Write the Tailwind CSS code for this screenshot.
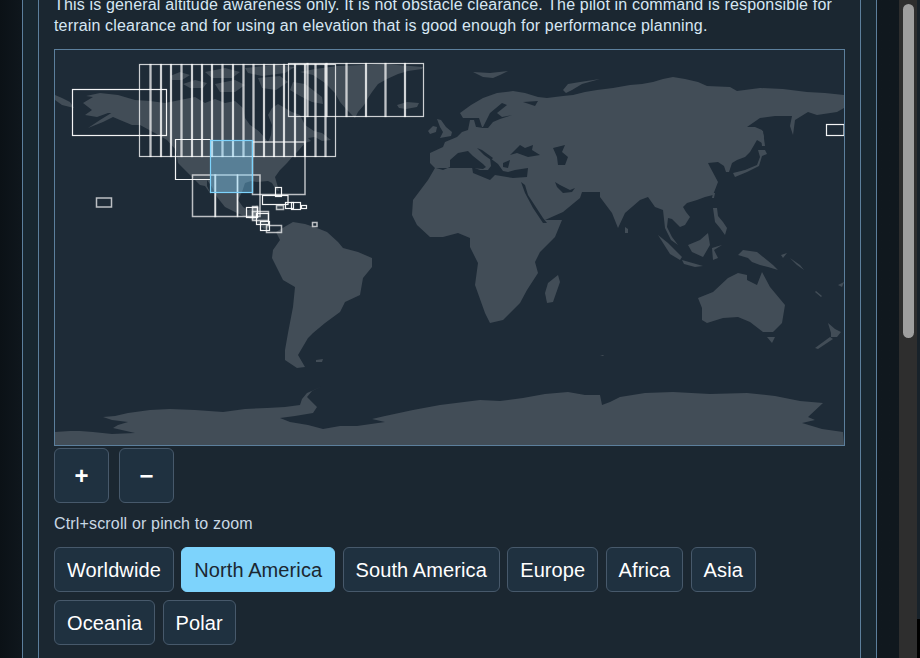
<!DOCTYPE html>
<html lang="en">
<head>
<meta charset="utf-8">
<title>Map</title>
<script src="https://cdn.jsdelivr.net/npm/@tailwindcss/browser@4"></script>
</head>
<body class="bg-[#10181e]">
<div class="flex h-[658px] w-[920px] overflow-hidden font-['Liberation_Sans',Arial,sans-serif]">
  <main class="flex-1 min-w-0 pl-[22px] pr-[22px] bg-gradient-to-r from-[#0b1116] from-0% to-[#10181e] to-[3%]">
    <div class="h-full border-x border-[#5c7f9c] bg-[#182730] px-[15px]">
      <section class="h-full border-x border-[#5c7f9c] bg-[#1b2731] px-[15px] overflow-hidden">
        <p class="-mt-[6px] text-base leading-[21px] tracking-[0.165px] text-[#d6e6f3] w-[791px]">This is general altitude awareness only. It is not obstacle clearance. The pilot in command is responsible for terrain clearance and for using an elevation that is good enough for performance planning.</p>
        <div class="mt-[13px] h-[397px] w-[791px] border border-[#5c7f9c] bg-[#1e2b37] overflow-hidden">
          <svg class="block h-[395px] w-[789px]" viewBox="55 50 789 395" xmlns="http://www.w3.org/2000/svg">
            <g class="fill-[#424d57]">
              <path d="M55 95L62 98L70 102L74 108L62 105L55 100Z"/>
              <path d="M86 96L100 93L118 95L135 100L150 101L165 103L180 100L195 97L205 103L215 99L225 103L235 101L243 108L245 118L250 125L258 130L264 137L268 142L271 135L272 125L268 115L272 108L278 104L285 108L292 112L300 115L305 125L314 131L322 133L331 140L322 141L315 137L308 138L311 141L305 143L299 150L293 156L287 163L280 170L275 177L277 184L279 191L276 190L272 183L268 181L257 182L251 181L245 183L242 192L238 200L243 207L248 210L253 208L257 205L260 208L258 215L253 217L257 220L262 221L267 223L270 228L264 229L257 222L248 218L237 213L225 207L217 197L212 187L207 180L207 186L212 196L205 186L200 185L190 175L178 163L176 150L167 140L153 132L140 125L132 125L120 120L113 117L103 122L88 128L100 120L113 112L117 113L108 113L97 117L85 115L92 110L83 103L93 97Z"/>
              <path d="M183 84L195 80L207 83L203 88L190 88Z"/>
              <path d="M170 76L180 72L190 75L182 80L172 80Z"/>
              <path d="M205 72L225 68L240 72L232 78L212 78Z"/>
              <path d="M215 84L235 80L245 85L235 92L220 92Z"/>
              <path d="M245 68L275 65L295 67L285 73L262 76L248 73Z"/>
              <path d="M258 78L280 76L288 82L276 90L262 88Z"/>
              <path d="M293 82L305 84L322 97L323 104L312 102L300 96L290 90Z"/>
              <path d="M300 72L315 69L337 66L362 65L385 64L423 67L422 69L408 71L398 74L387 79L378 84L372 92L368 98L364 105L358 112L355 118L350 113L346 109L340 102L335 93L325 83L313 75Z"/>
              <path d="M397 105L407 102L419 103L417 107L406 109L399 108Z"/>
              <path d="M473 72L490 73L508 71L500 75L493 78L483 77Z"/>
              <path d="M437 119L441 120L446 127L452 132L451 136L440 138L443 132L440 127Z"/>
              <path d="M428 131L433 126L437 127L436 132L430 134Z"/>
              <path d="M563 90L568 84L580 82L600 79L582 84L572 90L566 93Z"/>
              <path d="M460 113L471 105L483 98L497 93L513 91L525 93L538 97L547 98L563 96L573 95L585 92L597 90L613 88L630 85L642 84L653 82L663 79L673 77L685 79L698 82L707 86L730 87L737 91L760 88L783 89L807 92L825 93L844 95L844 108L837 112L817 115L808 112L795 120L793 135L790 126L792 116L775 116L760 118L747 127L755 127L762 130L764 137L762 143L757 140L750 152L745 157L737 160L732 163L729 172L726 172L724 166L718 162L708 163L710 167L718 182L713 195L705 197L697 200L687 203L683 207L686 212L690 217L685 225L680 227L672 219L668 218L667 227L672 237L678 245L671 240L665 228L663 210L655 207L648 197L640 200L625 213L618 228L612 213L600 197L600 192L582 192L580 198L563 212L545 220L562 220L555 237L540 252L535 262L538 273L527 290L520 303L503 320L490 323L485 313L475 285L478 263L470 247L470 238L458 233L443 237L430 237L417 225L412 215L413 200L428 180L435 168L430 163L430 153L443 147L445 142L457 137L462 132L468 130L470 120L474 120L476 127L482 127L479 118L468 118L463 118Z"/>
              <path d="M558 275L560 282L553 302L547 303L545 293L548 283Z"/>
              <path d="M625 227L628 229L628 233L625 233Z"/>
              <path d="M760 130L763 131L765 146L762 146Z"/>
              <path d="M733 173L745 170L757 165L760 157L758 150L765 150L767 154L762 156L759 166L747 172L735 177Z"/>
              <path d="M713 193L715 193L714 198L712 198Z"/>
              <path d="M713 208L717 208L718 216L723 222L727 228L725 235L720 228L715 222Z"/>
              <path d="M688 245L700 240L708 233L710 245L703 257L692 252Z"/>
              <path d="M658 235L668 243L682 257L680 260L670 254Z"/>
              <path d="M682 260L703 266L695 267L684 264Z"/>
              <path d="M712 248L722 245L714 250L718 258L713 260Z"/>
              <path d="M743 250L757 252L773 265L778 270L768 267L760 265L752 262L748 258L738 255Z"/>
              <path d="M698 298L713 292L728 278L738 273L747 275L747 280L757 285L762 272L770 287L785 305L782 323L773 332L763 332L750 322L738 317L723 318L707 323L702 320L702 308Z"/>
              <path d="M767 337L775 337L772 343Z"/>
              <path d="M828 323L835 329L841 332L837 337L831 337L831 333Z"/>
              <path d="M830 337L833 339L818 349L815 348Z"/>
              <path d="M280 240L276 232L286 226L293 222L305 224L317 228L327 232L338 242L343 248L358 252L372 258L372 267L363 278L360 295L345 302L340 312L325 323L313 333L308 338L298 355L305 367L297 368L285 360L285 350L288 333L293 307L295 287L283 280L272 258L273 250Z"/>
              <path d="M316 360L323 359L322 362L316 362Z"/>
              <path d="M55 445L55 432L70 431L80 431L93 432L112 434L135 433L113 428L118 425L128 422L112 420L103 417L115 416L128 413L150 410L170 409L195 410L223 412L245 409L267 408L285 407L300 405L302 399L307 393L323 386L312 391L307 397L317 407L313 413L295 416L280 418L290 422L308 425L323 429L340 426L357 426L385 422L372 419L385 416L413 410L440 405L480 400L500 401L523 398L545 394L568 392L585 395L600 395L602 405L610 402L620 397L645 393L673 392L710 394L747 393L775 396L800 401L823 403L808 417L815 420L802 423L822 429L843 432L844 445Z"/>
              <path d="M781 255L787 253L783 258Z M790 258L800 265L804 270L797 265Z M815 282L818 285L816 283Z M816 291L822 296L821 297L815 292Z M838 285L844 282L842 287Z M600 355L604 355L603 356Z"/>
            </g>
            <g class="fill-[#1e2b37]">
              <path d="M477 128L483 127L490 113L502 103L507 105L497 113L502 117L512 115L500 119L493 122L488 128Z"/>
              <path d="M523 102L538 101L535 106Z"/>
              <path d="M436 168L443 170L450 167L450 160L458 153L468 151L473 156L483 164L486 167L483 169L472 168L455 168Z"/>
              <path d="M472 167L473 173L490 180L495 175L513 178L527 177L528 168L515 170L508 172L503 171L498 164L490 158L491 166L488 170L480 170Z"/>
              <path d="M477 148L482 150L493 158L491 160L484 155Z"/>
              <path d="M503 163L510 160L508 168L503 167Z"/>
              <path d="M510 155L520 145L525 148L533 145L532 150L540 155L528 157L517 153Z"/>
              <path d="M553 148L565 145L562 152L568 157L565 165L558 165L557 157Z"/>
              <path d="M555 182L560 185L570 190L575 188L572 192L563 193L557 187Z"/>
              <path d="M521 182L525 185L528 195L543 218L547 223L543 223L533 208L525 193Z"/>
              <path d="M245 108L262 111L268 116L271 126L269 140L264 135L256 129L250 124Z"/>
            </g>
            <g fill="none" stroke="#ffffff" stroke-opacity="0.78" stroke-width="1.2">
              <rect x="139.5" y="64.5" width="11.5" height="92"/><rect x="150" y="64.5" width="11.5" height="92"/><rect x="160.5" y="64.5" width="11" height="92"/><rect x="170.5" y="64.5" width="11.5" height="92"/><rect x="181" y="64.5" width="11.5" height="92"/><rect x="191.5" y="64.5" width="11" height="92"/><rect x="201.5" y="64.5" width="11" height="92"/><rect x="211.5" y="64.5" width="11.5" height="92"/><rect x="222" y="64.5" width="11.5" height="92"/><rect x="232.5" y="64.5" width="11.5" height="92"/><rect x="243" y="64.5" width="11" height="92"/><rect x="253" y="64.5" width="11.5" height="92"/><rect x="263.5" y="64.5" width="11" height="92"/><rect x="273.5" y="64.5" width="11" height="92"/><rect x="283.5" y="64.5" width="12" height="92"/><rect x="294.5" y="64.5" width="11" height="92"/><rect x="304.5" y="64.5" width="11.5" height="92"/><rect x="315" y="64.5" width="11" height="92"/><rect x="325" y="64.5" width="10.5" height="92"/>
              <rect x="288.5" y="63.5" width="19.5" height="53"/><rect x="307" y="63.5" width="20" height="53"/><rect x="326" y="63.5" width="21" height="53"/><rect x="346" y="63.5" width="20.5" height="53"/><rect x="365.5" y="63.5" width="20.5" height="53"/><rect x="385" y="63.5" width="20.5" height="53"/><rect x="404.5" y="63.5" width="19" height="53"/>
            </g>
            <g fill="none" stroke="#ffffff" stroke-opacity="0.7" stroke-width="1.5">
              <rect x="252.5" y="142" width="52.5" height="52.5"/>
              <rect x="192.5" y="175" width="23" height="41.5"/><rect x="215" y="175" width="22.5" height="41.5"/><rect x="237.5" y="175" width="22.5" height="41.5"/>
              <rect x="96.5" y="198" width="15" height="9"/>
              <rect x="276.5" y="205.5" width="7" height="4" fill="#ffffff" fill-opacity=".12"/>
              <rect x="312.5" y="222.5" width="4.5" height="4" />
              <rect x="252.5" y="206.5" width="5" height="11" fill="#ffffff" fill-opacity=".2"/>
              <rect x="252.5" y="211.5" width="16" height="9" fill="#ffffff" fill-opacity=".1"/>
              <rect x="266.5" y="225.5" width="15" height="7"/>
            </g>
            <g fill="none" stroke="#ffffff" stroke-opacity="0.95" stroke-width="1.2">
              <path d="M210.5 139.5H175.5V179.5H210.5"/>
              <rect x="72.5" y="89.5" width="94" height="46"/>
              <rect x="826.5" y="124.5" width="17.5" height="11"/>
              <rect x="275.5" y="187.5" width="6" height="9"/>
              <rect x="262.5" y="195.5" width="25.5" height="9"/>
              <rect x="285.5" y="202.5" width="8" height="6"/>
              <rect x="291.5" y="202.5" width="9" height="7"/>
              <rect x="301.5" y="205.5" width="5" height="3"/>
              <rect x="246.5" y="207.5" width="11" height="10"/>
              <rect x="256.5" y="213.5" width="12" height="11"/>
              <rect x="260.5" y="221.5" width="9" height="9"/>
            </g>
            <rect x="210.5" y="140.5" width="42" height="52" fill="#7dd3fc" fill-opacity="0.38" stroke="#7dd3fc" stroke-width="1.2"/>
          </svg>
        </div>
        <div class="mt-[2px] flex gap-[10px]">
          <button class="h-[55px] w-[55px] rounded-md border border-[#47596b] bg-[#1f3140] text-2xl font-bold text-white">+</button>
          <button class="h-[55px] w-[55px] rounded-md border border-[#47596b] bg-[#1f3140] text-2xl font-bold text-white">−</button>
        </div>
        <p class="mt-[12px] text-base leading-[18px] tracking-[0.16px] text-[#c9d8e4]">Ctrl+scroll or pinch to zoom</p>
        <div class="mt-[14px] flex flex-wrap gap-x-[7.3px] gap-y-[8px] w-[791px] tracking-[0.1px]">
          <button class="h-[45px] rounded-md border border-[#47596b] bg-[#1f3140] px-3 text-xl text-white">Worldwide</button>
          <button class="h-[45px] rounded-md border border-[#7dd3fc] bg-[#7dd3fc] px-3 text-xl text-[#1b2731]">North America</button>
          <button class="h-[45px] rounded-md border border-[#47596b] bg-[#1f3140] px-3 text-xl text-white">South America</button>
          <button class="h-[45px] rounded-md border border-[#47596b] bg-[#1f3140] px-3 text-xl text-white">Europe</button>
          <button class="h-[45px] rounded-md border border-[#47596b] bg-[#1f3140] px-3 text-xl text-white">Africa</button>
          <button class="h-[45px] rounded-md border border-[#47596b] bg-[#1f3140] px-3 text-xl text-white">Asia</button>
          <button class="h-[45px] rounded-md border border-[#47596b] bg-[#1f3140] px-3 text-xl text-white">Oceania</button>
          <button class="h-[45px] rounded-md border border-[#47596b] bg-[#1f3140] px-3 text-xl text-white">Polar</button>
        </div>
      </section>
    </div>
  </main>
  <div class="flex h-full w-[21px] shrink-0">
    <div class="relative h-full w-[18px] bg-[#2e2e2e]">
      <div class="absolute left-[4px] top-[4px] h-[334px] w-[11px] rounded-full bg-[#9f9f9f]"></div>
    </div>
    <div class="h-full w-[3px] bg-gradient-to-b from-[#18222a] from-[94%] to-[#000000] to-[94%]"></div>
  </div>
</div>
</body>
</html>
